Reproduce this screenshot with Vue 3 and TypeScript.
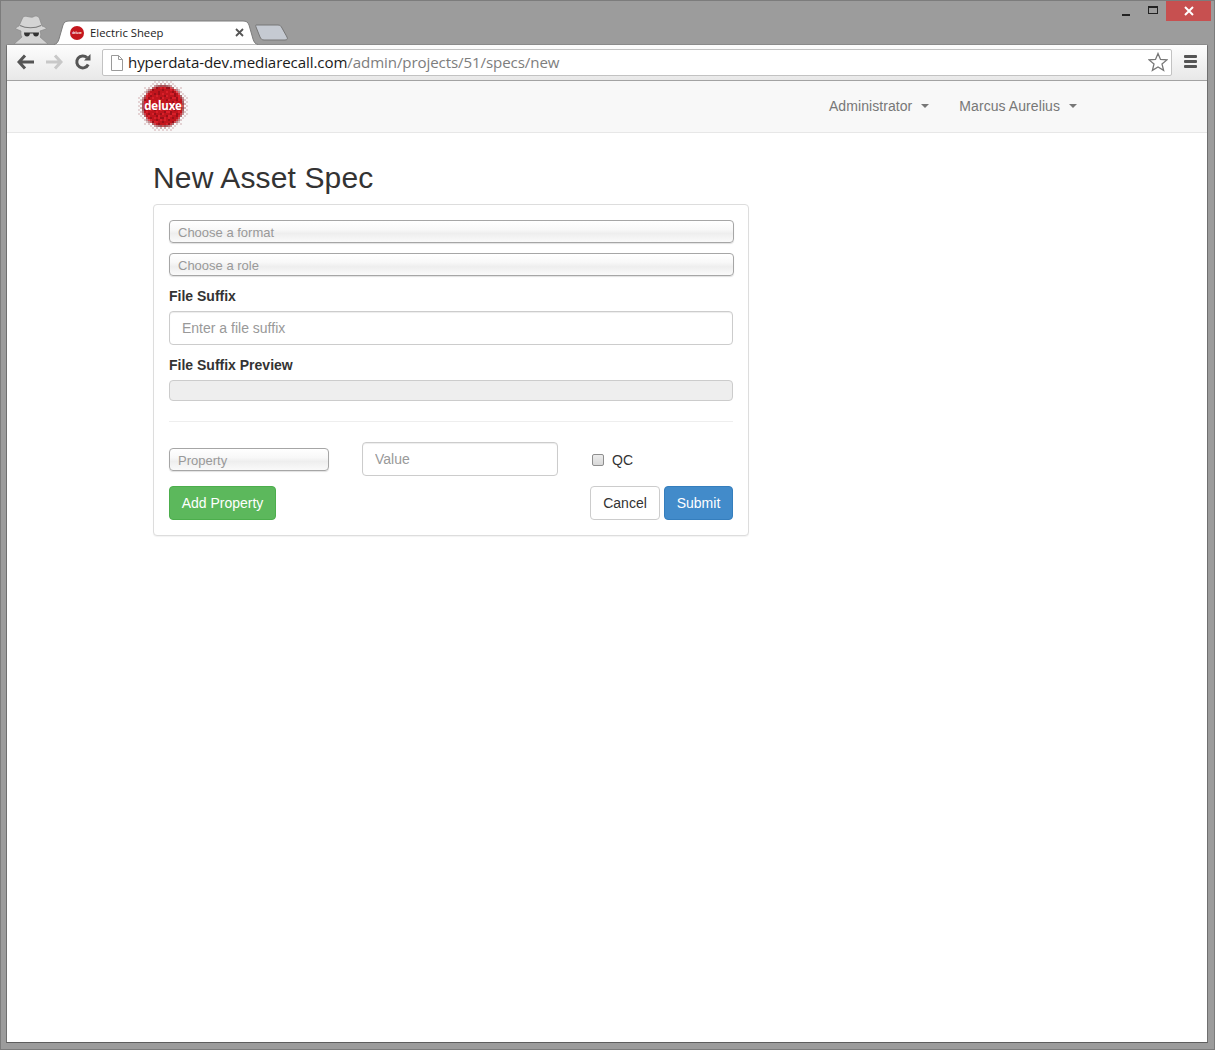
<script setup lang="ts">
import { computed } from 'vue'

interface Dot { x: number; y: number; s: number; c: string }

const logoDots = computed<Dot[]>(() => {
  const dots: Dot[] = []
  const step = 2
  const cx = 25
  const cy = 25
  for (let x = 1; x < 50; x += step) {
    for (let y = 1; y < 50; y += step) {
      const d = Math.hypot(x - cx, y - cy)
      if (d > 25.5) continue
      if (d > 21.5 && ((x + y) / 2) % 2 === 0) continue
      const edge = d > 19 ? (26 - d) / 7 : 1
      const noise = Math.sin(x * 0.9 + y * 0.4) * Math.cos(y * 0.8 - x * 0.3) + 0.4 * Math.sin(x * y * 0.07)
      const base = noise > 0.5 ? '#9a1019' : noise < -0.45 ? '#d9202a' : '#c0151d'
      dots.push({ x, y, s: 2 * Math.max(0.4, edge), c: d > 20 ? '#7a0e15' : base })
    }
  }
  return dots
})
</script>

<template>
  <div class="window">
    <div class="strip">
      <svg class="spy" width="40" height="30" viewBox="0 0 40 30">
        <path d="M12 3 C15 1 19 4 22 3 C25 1 28 2 29 6 L31 12 C34 13 36 14 35 15 L29 17 C30 20 30 22 29 23 L37 30 H3 L11 23 C9.5 21 10 19 10 17 L5 15 C4 14 6 13 8 12 Z" fill="#d4d4d4" stroke="#8a8a8a" stroke-width=".7"/>
        <path d="M9 11.5 C15 14.5 24 14.5 30 11.5" fill="none" stroke="#7a7a7a" stroke-width="1.2"/>
        <path d="M13 18.5 H19 C19 21 18 22.5 16 22.5 C14 22.5 13 21 13 18.5 Z M22 18.5 H28 C28 21 27 22.5 25 22.5 C23 22.5 22 21 22 18.5 Z M18 18.5 H23 V19.5 H18 Z" fill="#333"/>
      </svg>
      <div class="tab">
        <svg class="tab-shape" width="204" height="25" viewBox="0 0 204 25">
          <path d="M0 24.5 C3 24 4 22 5 19 L9 5 C10 2 12 1 15 1 L189 1 C192 1 194 2 195 5 L199 19 C200 22 201 24 204 24.5 L204 25 L0 25 Z" fill="#fff" stroke="#7d7d7d" stroke-width="1"/>
        </svg>
        <span class="favicon"><span>deluxe</span></span>
        <span class="tab-title">Electric Sheep</span>
        <svg class="tab-x" width="9" height="9" viewBox="0 0 9 9"><path d="M1 1 L8 8 M8 1 L1 8" stroke="#555" stroke-width="1.8"/></svg>
      </div>
      <svg class="newtab" width="34" height="17" viewBox="0 0 34 17"><path d="M1 1 H23 C25 1 26 2 27 4 L32 13 C33 15 32 16 30 16 H9 C7 16 6 15 5 13 L1 3 C0.6 2 0.6 1 1 1 Z" fill="#c5cad2" stroke="#777"/></svg>
      <div class="caption">
        <span class="cap cap-min"><i></i></span>
        <span class="cap cap-max"><i></i></span>
        <span class="cap cap-close">
          <svg width="10" height="10" viewBox="0 0 10 10"><path d="M1 1 L9 9 M9 1 L1 9" stroke="#fff" stroke-width="2"/></svg>
        </span>
      </div>
    </div>

    <div class="browser">
      <div class="toolbar">
        <svg class="tool back" width="19" height="16" viewBox="0 0 19 16"><path d="M8 1.5 L2 8 L8 14.5 M2.5 8 H17" fill="none" stroke="#555" stroke-width="3"/></svg>
        <svg class="tool fwd" width="19" height="16" viewBox="0 0 19 16"><path d="M11 1.5 L17 8 L11 14.5 M16.5 8 H2" fill="none" stroke="#c8c8c8" stroke-width="3"/></svg>
        <svg class="tool reload" width="18" height="18" viewBox="0 0 18 18"><path d="M14.2 11.5 A6 6 0 1 1 13 4.6" fill="none" stroke="#555" stroke-width="3"/><path d="M10 7.5 H16.5 V1 Z" fill="#555"/></svg>
        <div class="omnibox">
          <svg width="13" height="16" viewBox="0 0 13 16"><path d="M1.5 .5 H8.5 L12.5 4.5 V15.5 H1.5 Z M8.5 .5 V4.5 H12.5" fill="#fff" stroke="#9a9a9a"/></svg>
          <span class="url"><span class="host">hyperdata-dev.mediarecall.com</span><span class="path">/admin/projects/51/specs/new</span></span>
          <svg class="star" width="20" height="20" viewBox="0 0 20 20"><path d="M10 1.5 L12.5 7.4 L18.9 7.9 L14 12 L15.6 18.4 L10 15 L4.4 18.4 L6 12 L1.1 7.9 L7.5 7.4 Z" fill="#fff" stroke="#777" stroke-width="1.3"/></svg>
        </div>
        <span class="menu"><i></i><i></i><i></i></span>
      </div>

      <nav class="navbar">
        <svg class="logo" width="50" height="50" viewBox="0 0 50 50">
          <rect v-for="(d, i) in logoDots" :key="i" :x="d.x - d.s / 2" :y="d.y - d.s / 2" :width="d.s" :height="d.s" :fill="d.c" />
          <text x="25" y="28.5" text-anchor="middle" class="logo-text">deluxe</text>
        </svg>
        <div class="nav-links">
          <a class="nav-link">Administrator<b class="caret"></b></a>
          <a class="nav-link">Marcus Aurelius<b class="caret"></b></a>
        </div>
      </nav>

      <main class="content">
        <h1>New Asset Spec</h1>
        <form class="panel" @submit.prevent>
          <div class="fake-select">Choose a format</div>
          <div class="fake-select second">Choose a role</div>
          <label class="lbl">File Suffix</label>
          <input class="field" placeholder="Enter a file suffix" />
          <label class="lbl">File Suffix Preview</label>
          <div class="disabled-box"></div>
          <hr />
          <div class="prop-row">
            <div class="fake-select prop">Property</div>
            <input class="field value" placeholder="Value" />
            <label class="qc"><span class="check"></span>QC</label>
          </div>
          <div class="actions">
            <button class="btn green" type="button">Add Property</button>
            <div class="right">
              <button class="btn plain" type="button">Cancel</button>
              <button class="btn blue" type="button">Submit</button>
            </div>
          </div>
        </form>
      </main>
    </div>
  </div>
</template>

<style>
html, body { margin: 0; background: #9c9c9c; }
</style>

<style scoped>
* { box-sizing: border-box; }
.window {
  width: 1215px;
  height: 1050px;
  background: #9c9c9c;
  border: 1px solid #7c7c7c;
  padding: 0 6px 6px 5px;
  display: flex;
  flex-direction: column;
  font-family: "Liberation Sans", Arial, sans-serif;
  overflow: hidden;
}
.strip {
  height: 43px;
  flex: none;
  display: flex;
  align-items: flex-end;
  position: relative;
}
.spy { margin-left: 5px; flex: none; }
.tab {
  position: relative;
  width: 204px;
  height: 25px;
  margin-left: 3px;
  flex: none;
  display: flex;
  align-items: center;
  padding: 0 14px 0 16px;
  margin-bottom: -1px;
}
.tab-shape { position: absolute; left: 0; top: 0; }
.favicon {
  position: relative;
  width: 14px;
  height: 14px;
  border-radius: 50%;
  background: #c4161d;
  display: flex;
  align-items: center;
  justify-content: center;
  flex: none;
}
.favicon span { font-size: 3px; color: #fff; font-weight: 700; }
.tab-title {
  position: relative;
  font-family: "Open Sans", sans-serif;
  font-size: 11.3px;
  color: #222;
  margin: 0 0 1px 6px;
  flex: 1;
}
.tab-x { position: relative; flex: none; }
.newtab { flex: none; margin-left: -3px; margin-bottom: 3px; }
.caption {
  position: absolute;
  right: -3px;
  top: 0;
  display: flex;
  align-items: flex-start;
}
.cap { display: flex; align-items: center; justify-content: center; height: 20px; }
.cap-min { width: 27px; }
.cap-min i { display: block; width: 8px; height: 2px; background: #222; margin-top: 8px; margin-left: 1px; }
.cap-max { width: 27px; }
.cap-max i { display: block; width: 10px; height: 8px; border: 1px solid #222; border-top-width: 2px; margin-top: -2px; margin-left: 1px; }
.cap-close { width: 45px; background: #c75050; }
.browser {
  flex: 1;
  display: flex;
  flex-direction: column;
  background: #fff;
  border: 1px solid #6f6f6f;
  border-bottom-color: #5e5e5e;
  border-top-color: #8a8a8a;
  border-radius: 2px 2px 0 0;
  min-height: 0;
}
.toolbar {
  height: 36px;
  flex: none;
  display: flex;
  align-items: center;
  padding: 0 11px 0 10px;
  background: linear-gradient(#fdfdfd, #e8e8e8);
  border-bottom: 1px solid #a3a3a3;
}
.tool { flex: none; margin-bottom: 2px; }
.back { margin-right: 8px; }
.fwd { margin-right: 11px; }
.reload { margin-right: 10px; }
.omnibox {
  width: 1070px;
  height: 27px;
  flex: none;
  display: flex;
  align-items: center;
  padding: 0 3px 0 7px;
  background: #fff;
  border: 1px solid #c2c2c2;
  border-radius: 2px;
}
.url {
  flex: 1;
  margin: 0 0 2px 5px;
  font-family: "Open Sans", sans-serif;
  font-size: 15.1px;
  white-space: nowrap;
  letter-spacing: -0.1px;
}
.host { color: #1a1a1a; }
.path { color: #7d7d7d; }
.star { flex: none; margin-bottom: 1px; }
.menu {
  display: flex;
  flex-direction: column;
  gap: 2px;
  margin: 0 0 2px 12px;
  width: 13px;
  flex: none;
}
.menu i { display: block; height: 3px; background: #555; border-radius: 1px; }
.navbar {
  height: 52px;
  flex: none;
  display: flex;
  align-items: center;
  justify-content: space-between;
  background: #f8f8f8;
  border-bottom: 1px solid #e7e7e7;
  padding: 0 130px 0 131px;
}
.logo { flex: none; margin-top: -1px; }
.logo-text {
  font-family: "Open Sans", sans-serif;
  font-size: 11.5px;
  font-weight: 700;
  letter-spacing: -0.2px;
  fill: #fff;
}
.nav-links { display: flex; gap: 30px; padding-bottom: 2px; }
.nav-link {
  font-size: 14px;
  color: #777;
  letter-spacing: 0.07px;
  display: flex;
  align-items: center;
}
.caret {
  display: inline-block;
  width: 0;
  height: 0;
  margin-left: 9px;
  border-top: 4px solid #777;
  border-left: 4px solid transparent;
  border-right: 4px solid transparent;
}
.content { padding: 0 0 0 146px; flex: 1; background: #fff; }
h1 {
  font-size: 30px;
  line-height: 33px;
  font-weight: 400;
  color: #333;
  letter-spacing: 0.14px;
  margin: 28px 0 10px;
}
.panel {
  width: 596px;
  height: 332px;
  padding: 15px;
  border: 1px solid #ddd;
  border-radius: 4px;
  box-shadow: 0 1px 1px rgba(0, 0, 0, .05);
  background: #fff;
  display: flex;
  flex-direction: column;
}
.fake-select {
  width: 565px;
  height: 23px;
  line-height: 23px;
  padding-left: 8px;
  font-size: 13px;
  color: #999;
  border: 1px solid #a6a6a6;
  border-radius: 4px;
  background: linear-gradient(#fff 0%, #f8f8f8 40%, #eeeeee 60%, #fafafa 100%);
  box-shadow: 0 1px 1px rgba(0, 0, 0, .12);
}
.second { margin-top: 10px; }
.lbl {
  display: block;
  font-size: 14px;
  line-height: 20px;
  font-weight: 700;
  color: #333;
  margin-top: 10px;
}
.field {
  display: block;
  width: 564px;
  height: 34px;
  margin-top: 5px;
  padding: 6px 12px;
  font-family: inherit;
  font-size: 14px;
  border: 1px solid #ccc;
  border-radius: 4px;
  background: #fff;
  box-shadow: inset 0 1px 1px rgba(0, 0, 0, .075);
  outline: none;
}
.field::placeholder { color: #999; opacity: 1; }
.disabled-box {
  width: 564px;
  height: 21px;
  margin-top: 5px;
  background: #eee;
  border: 1px solid #ccc;
  border-radius: 4px;
}
hr {
  width: 564px;
  margin: 20px 0 0;
  border: 0;
  border-top: 1px solid #eee;
}
.prop-row {
  display: flex;
  align-items: center;
  margin-top: 20px;
  height: 34px;
}
.fake-select.prop { width: 160px; }
.field.value { width: 196px; margin: 0 0 0 33px; }
.qc {
  display: flex;
  align-items: center;
  margin: 2px 0 0 34px;
  font-size: 14px;
  color: #333;
}
.check {
  width: 12px;
  height: 12px;
  margin-right: 8px;
  border: 1px solid #8e8e8e;
  border-radius: 2px;
  background: linear-gradient(#ececec, #d8d8d8);
}
.actions {
  display: flex;
  justify-content: space-between;
  width: 564px;
  margin-top: 10px;
}
.right { display: flex; gap: 4px; }
.btn {
  height: 34px;
  padding: 0;
  font-family: inherit;
  font-size: 14px;
  border: 1px solid transparent;
  border-radius: 4px;
}
.green { width: 107px; background: #5cb85c; border-color: #4cae4c; color: #fff; }
.blue { width: 69px; background: #428bca; border-color: #357ebd; color: #fff; }
.plain { width: 70px; background: #fff; border-color: #ccc; color: #333; }
</style>
